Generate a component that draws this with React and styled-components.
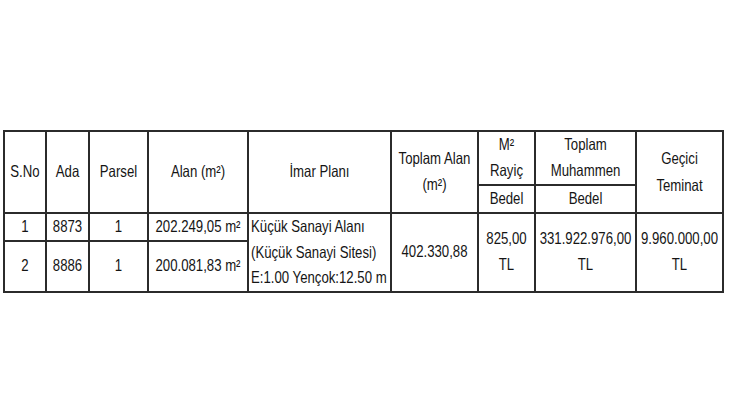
import React from 'react'
import styled, { createGlobalStyle } from 'styled-components'

const GlobalStyle = createGlobalStyle`
    html, body {
        margin: 0;
        padding: 0;
        background: #ffffff;
    }
    body {
        font-family: "Liberation Sans", Arial, sans-serif;
        color: #111;
    }
`

const columns = [42, 43, 59, 100, 143, 87, 57, 101, 87]

const rows = [
    { no: '1', ada: '8873', parsel: '1', alan: '202.249,05 m²' },
    { no: '2', ada: '8886', parsel: '1', alan: '200.081,83 m²' },
]

// each line is its own block so the narrow, tall look of the scan can be faked per line
const Lines = ({ children, lh }) => (
    <>
        {[].concat(children).map((t, i) => <Line key={i} lh={lh}>{t}</Line>)}
    </>
)

const App = () => {
    return (
        <Page>
            <GlobalStyle />
            <Table>
                <colgroup>
                    {columns.map((w, i) => <col key={i} style={{ width: w }} />)}
                </colgroup>
                <thead>
                    <HeadRow height={54}>
                        <Cell rowSpan={2}><Lines>S.No</Lines></Cell>
                        <Cell rowSpan={2}><Lines>Ada</Lines></Cell>
                        <Cell rowSpan={2}><Lines>Parsel</Lines></Cell>
                        <Cell rowSpan={2}><Lines>Alan (m²)</Lines></Cell>
                        <Cell rowSpan={2}><Lines>İmar Planı</Lines></Cell>
                        <Cell rowSpan={2}><Lines>{['Toplam Alan', '(m²)']}</Lines></Cell>
                        <Cell><Lines lh={26}>{['M²', 'Rayiç']}</Lines></Cell>
                        <Cell><Lines>{['Toplam', 'Muhammen']}</Lines></Cell>
                        <Cell rowSpan={2}><Lines lh={27}>{['Geçici', 'Teminat']}</Lines></Cell>
                    </HeadRow>
                    <HeadRow height={26}>
                        <Cell><Lines>Bedel</Lines></Cell>
                        <Cell><Lines>Bedel</Lines></Cell>
                    </HeadRow>
                </thead>
                <tbody>
                    {rows.map((r, i) => (
                        <BodyRow key={r.no} height={i === 0 ? 27 : 50}>
                            <Cell><Lines>{r.no}</Lines></Cell>
                            <Cell><Lines>{r.ada}</Lines></Cell>
                            <Cell><Lines>{r.parsel}</Lines></Cell>
                            <Cell><Lines>{r.alan}</Lines></Cell>
                            {i === 0 && (
                                <>
                                    <Cell rowSpan={2} align="left">
                                        <Lines lh={25.5}>
                                            {['Küçük Sanayi Alanı', '(Küçük Sanayi Sitesi)', 'E:1.00 Yençok:12.50 m']}
                                        </Lines>
                                    </Cell>
                                    <Cell rowSpan={2}><Lines>402.330,88</Lines></Cell>
                                    <Cell rowSpan={2}><Lines>{['825,00', 'TL']}</Lines></Cell>
                                    <Cell rowSpan={2}><Lines>{['331.922.976,00', 'TL']}</Lines></Cell>
                                    <Cell rowSpan={2}><Lines>{['9.960.000,00', 'TL']}</Lines></Cell>
                                </>
                            )}
                        </BodyRow>
                    ))}
                </tbody>
            </Table>
        </Page>
    )
}

export default App

const Page = styled.div`
    width: 730px;
    height: 420px;
    padding: 130px 0 0 3px;
    box-sizing: border-box;
`

const Table = styled.table`
    table-layout: fixed;
    border-collapse: collapse;
    width: 719px;
`

const HeadRow = styled.tr`
    height: ${p => p.height}px;
`

const BodyRow = styled.tr`
    height: ${p => p.height}px;
`

const Cell = styled.td`
    border: 2px solid #2b2b2b;
    padding: 0 1px 0 ${p => (p.align === 'left' ? 2 : 1)}px;
    text-align: ${p => p.align || 'center'};
    vertical-align: middle;
    white-space: nowrap;
    color: #151515;
`

const Line = styled.span`
    display: block;
    font-size: 13.2px;
    line-height: ${p => p.lh || 26}px;
    transform: scaleY(1.25);
    transform-origin: center;
`
